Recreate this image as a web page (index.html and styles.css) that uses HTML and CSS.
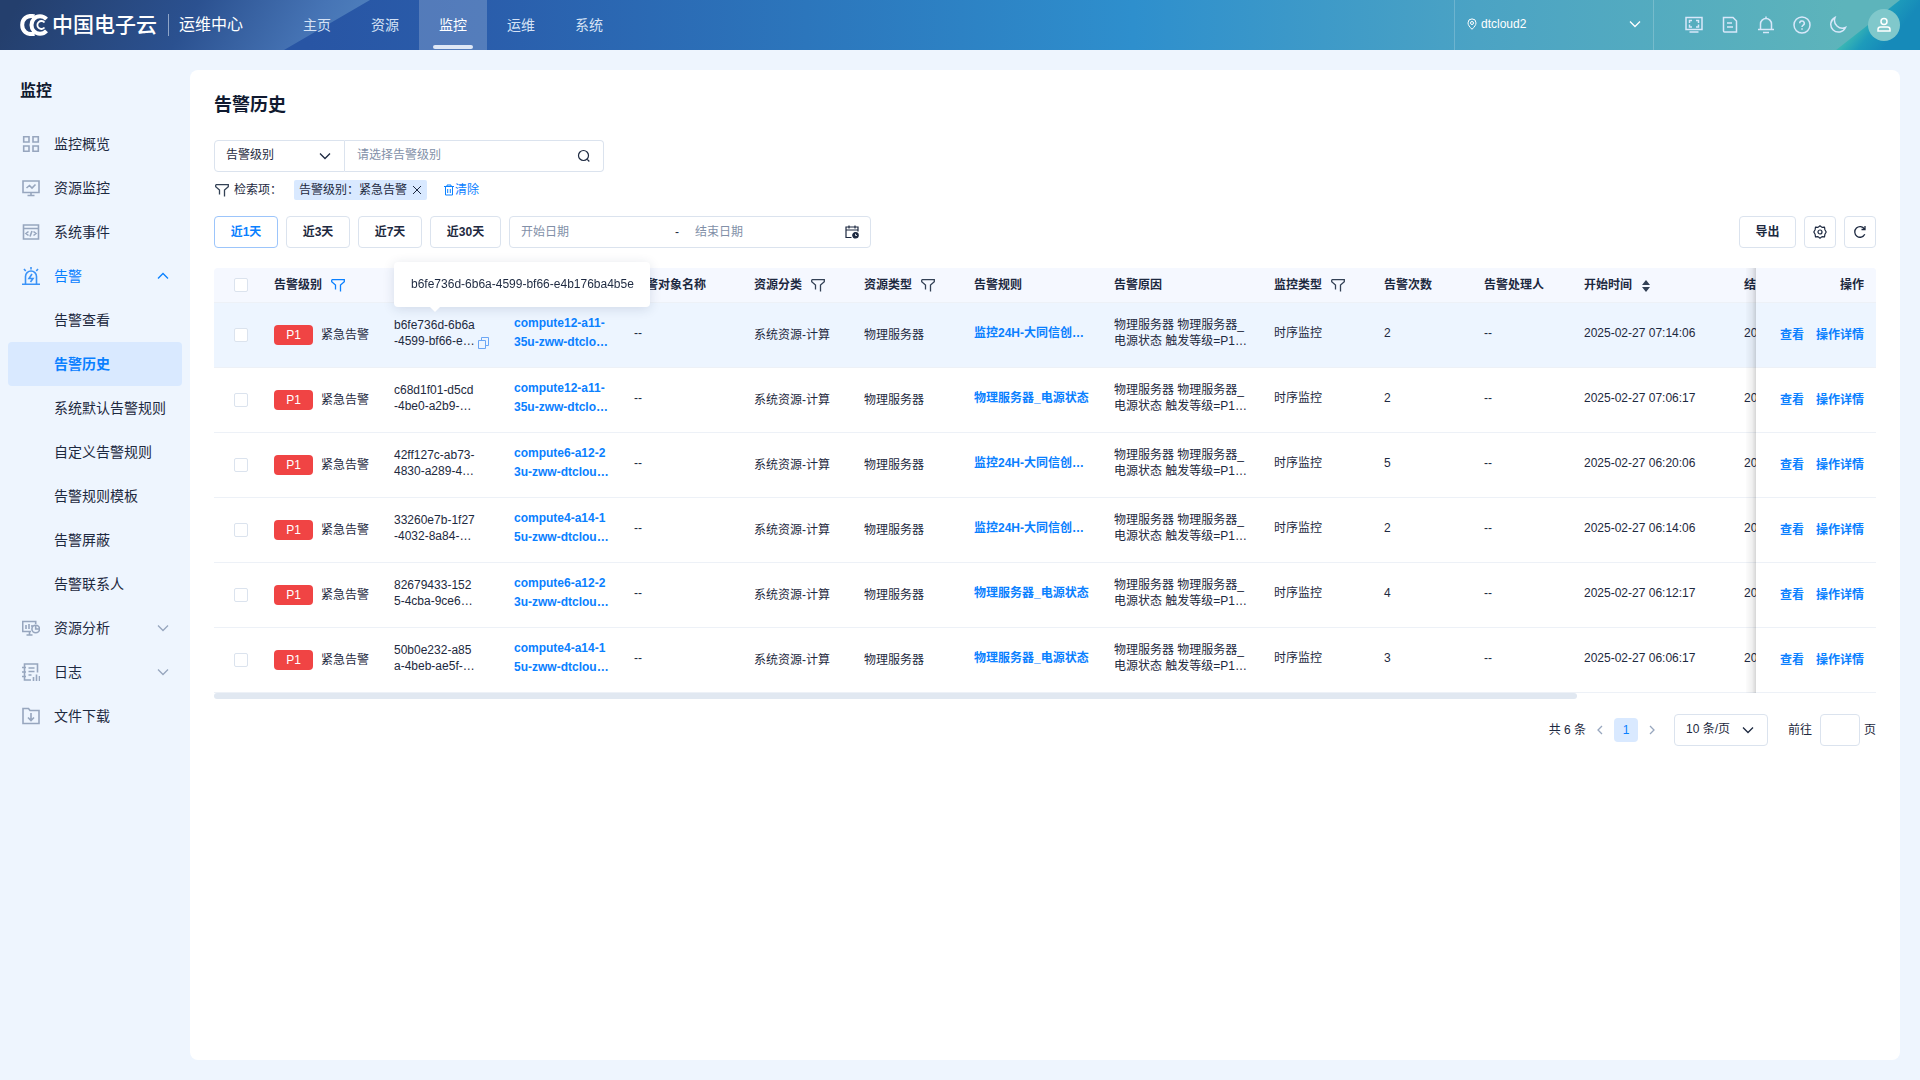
FILE: index.html
```html
<!DOCTYPE html>
<html lang="zh-CN">
<head>
<meta charset="utf-8">
<meta name="viewport" content="width=device-width, initial-scale=1">
<title>告警历史 - 运维中心</title>
<link rel="stylesheet" href="styles.css">
</head>
<body>
<svg class="sprite" aria-hidden="true">
  <symbol id="filter" viewBox="0 0 16 16"><path d="M1.7 2.7h12.6v2L10.500 8v6.500M1.700 2.700v2L5.500 8v4.500" fill="none" stroke="currentColor" stroke-width="1.300"/></symbol>
  <symbol id="down" viewBox="0 0 12 12"><path d="M1 3.500l5 5 5-5" fill="none" stroke="currentColor" stroke-width="1.300"/></symbol>
  <symbol id="up" viewBox="0 0 12 12"><path d="M1 8.500l5-5 5 5" fill="none" stroke="currentColor" stroke-width="1.300"/></symbol>
</svg>

<header class="topbar">
  <a class="brand" href="#">
    <svg class="brand-mark" viewBox="0 0 28 22" fill="none" stroke="#fff"><path d="M14.500 2.300C6.500 .500 2.200 5.500 2.200 11s4.300 10.500 12.300 8.700" stroke-width="4"/><path d="M26.500 5.200C24.500 3 22.500 2.300 20 2.300c-5 0-8.500 3.700-8.500 8.700s3.500 8.700 8.500 8.700c2.500 0 4.500-.7 6.500-2.900" stroke-width="4"/><path d="M24.500 8.500A4 4 0 1 0 24.500 13.500" stroke-width="1.800"/></svg>
    <span class="brand-name">中国电子云</span>
    <span class="brand-product">运维中心</span>
  </a>
  <nav class="topnav">
    <a href="#">主页</a>
    <a href="#">资源</a>
    <a href="#" class="active">监控</a>
    <a href="#">运维</a>
    <a href="#">系统</a>
  </nav>
  <button class="region" type="button">
    <svg width="10" height="12" viewBox="0 0 10 12" fill="none" stroke="currentColor"><path d="M5 11.300C2.500 8.700 1 7 1 4.900a4 4 0 0 1 8 0C9 7 7.500 8.700 5 11.300z"/><circle cx="5" cy="5" r="1.500"/></svg>
    <span>dtcloud2</span>
    <svg class="region-arrow" width="12" height="12"><use href="#down"/></svg>
  </button>
  <div class="tools">
    <button type="button" aria-label="大屏"><svg viewBox="0 0 18 18"><path d="M1 1.500h16v12H1zM4.500 16h9M4.500 7V4.500H7M11 4.500h2.500V7M13.500 8.500V11H11M7 11H4.500V8.500"/></svg></button>
    <button type="button" aria-label="文档"><svg viewBox="0 0 18 18"><path d="M3 1.500h9l3.500 3.500v11H3.500A1 1 0 0 1 2.500 15V1.500zM6 7h5M6 11h6"/></svg></button>
    <button type="button" aria-label="通知"><svg viewBox="0 0 18 18"><path d="M9 .5v2M3.500 13.500V8a5.500 5.500 0 0 1 11 0v5.500M1 13.500h16M6 16.500h6"/></svg></button>
    <button type="button" aria-label="帮助"><svg viewBox="0 0 18 18"><circle cx="9" cy="9" r="8"/><path d="M6.700 7.300a2.300 2.300 0 1 1 3.300 2c-.7.400-1 .8-1 1.700M9 12.300v1.500"/></svg></button>
    <button type="button" aria-label="深色模式"><svg viewBox="0 0 18 18"><path d="M6 1.500a7.700 7.700 0 1 0 10.500 10A7.900 7.900 0 0 1 6 1.500z"/></svg></button>
    <button type="button" class="avatar" aria-label="用户"><svg viewBox="0 0 18 18"><circle cx="9" cy="5.500" r="3"/><path d="M3 15v-1.500c0-1.800 1-2.500 2.500-2.500h7c1.500 0 2.500.7 2.500 2.500V15z"/></svg></button>
  </div>
</header>

<div class="layout">
  <aside class="sidebar">
    <h2>监控</h2>
    <nav class="menu">
      <a href="#"><svg viewBox="0 0 18 18"><path d="M1.700 1.700h5.300v5.300h-5.300zM11 1.700h5.300v5.300h-5.300zM1.700 11h5.300v5.300h-5.300zM11 11h5.300v5.300h-5.300z"/></svg><span>监控概览</span></a>
      <a href="#"><svg viewBox="0 0 18 18"><path d="M1 2h16v11.500H1zM9 13.500v3M5.500 16.500h7M4.500 9l3-2.500 2.500 2.500 3.500-3.500"/></svg><span>资源监控</span></a>
      <a href="#"><svg viewBox="0 0 18 18"><path d="M1.500 2h15v14h-15zM1.500 5.500h15M6.500 8.500l-2.500 2 2.500 2M11.500 8.500l2.500 2-2.500 2M10 8l-2 5.500"/></svg><span>系统事件</span></a>
      <a href="#" class="open"><svg viewBox="0 0 18 18"><path d="M0 17.300h18M3.500 17V9.500a5.500 5.500 0 0 1 11 0V17M9 0v2.500M2 2l1.700 2M16 2l-1.700 2M10 7l-3 4.500h4L8.500 15"/></svg><span>告警</span><svg class="caret"><use href="#up"/></svg></a>
      <a href="#" class="sub">告警查看</a>
      <a href="#" class="sub current">告警历史</a>
      <a href="#" class="sub">系统默认告警规则</a>
      <a href="#" class="sub">自定义告警规则</a>
      <a href="#" class="sub">告警规则模板</a>
      <a href="#" class="sub">告警屏蔽</a>
      <a href="#" class="sub">告警联系人</a>
      <a href="#"><svg viewBox="0 0 18 18"><path d="M9 12.500H.700v-10h13V5M4 6v4M7 5v5M10 6v2M7.500 12.500V16M4.500 16h6"/><circle cx="13.700" cy="10" r="3.800"/><path d="M13.700 6v4h4"/></svg><span>资源分析</span><svg class="caret"><use href="#down"/></svg></a>
      <a href="#"><svg viewBox="0 0 18 18"><path d="M9 17H2.500V1h13v8.500M0 4.500h4M0 9h4M0 13.500h4M6.500 5h6M6.500 8.500h6M6.500 12h3M11.500 18v-4M14.500 18v-6.500M17.500 18v-5"/></svg><span>日志</span><svg class="caret"><use href="#down"/></svg></a>
      <a href="#"><svg viewBox="0 0 18 18"><path d="M1 1.500h5.500l1.500 2h9v13H1zM9 6v7M6 10.500l3 3 3-3"/></svg><span>文件下载</span></a>
    </nav>
  </aside>

  <main class="card">
    <h1>告警历史</h1>

    <form class="search">
      <div class="select-box search-field">
        <select aria-label="检索字段"><option>告警级别</option></select>
        <svg><use href="#down"/></svg>
      </div>
      <div class="search-input">
        <input type="text" aria-label="告警级别" placeholder="请选择告警级别">
        <svg viewBox="0 0 14 14" fill="none" stroke="currentColor" stroke-width="1.200"><circle cx="6.500" cy="6.500" r="5"/><path d="M10.300 10.300l2 2.200"/></svg>
      </div>
    </form>

    <div class="criteria">
      <svg class="icon"><use href="#filter"/></svg>
      <span class="criteria-label">检索项：</span>
      <span class="tag">告警级别：紧急告警<button type="button" aria-label="移除"><svg viewBox="0 0 10 10"><path d="M1 1l8 8M9 1l-8 8" stroke="currentColor"/></svg></button></span>
      <button class="clear" type="button"><svg viewBox="0 0 12 12" fill="none" stroke="currentColor"><path d="M1 2.500h10M4 2.500v-1.500h4v1.500M2.500 3v8h7V3M4.700 5v4M7.300 5v4"/></svg>清除</button>
    </div>

    <div class="toolbar">
      <button class="btn preset selected" type="button">近1天</button>
      <button class="btn preset" type="button">近3天</button>
      <button class="btn preset" type="button">近7天</button>
      <button class="btn preset wide" type="button">近30天</button>
      <div class="date-range">
        <input type="text" aria-label="开始日期" placeholder="开始日期">
        <span>-</span>
        <input type="text" aria-label="结束日期" placeholder="结束日期">
        <svg viewBox="0 0 14 14" fill="none" stroke="currentColor" stroke-width="1.200"><path d="M6.500 12.500H1V2h12v4.500M1 5h12M4 .5v3M10 .5v3"/><circle cx="10.500" cy="10.300" r="2.700" fill="currentColor"/><path d="M10.500 8.800v1.700h1.500" stroke="#fff" stroke-width=".8"/></svg>
      </div>
      <div class="actions">
        <button class="btn export" type="button">导出</button>
        <button class="btn square" type="button" aria-label="设置"><svg viewBox="0 0 14 14" fill="none" stroke="currentColor" stroke-width="1.200"><path d="M7 .8l2 1.600 2.500-.2.400 2.500L13.200 7l-1.300 2.300-.4 2.500-2.500-.2-2 1.600-2-1.600-2.500.2-.4-2.500L.8 7l1.300-2.300.4-2.500 2.500.2z" stroke-linejoin="round"/><circle cx="7" cy="7" r="2"/></svg></button>
        <button class="btn square" type="button" aria-label="刷新"><svg viewBox="0 0 14 14" fill="none" stroke="currentColor" stroke-width="1.300"><path d="M11.800 9.300A5.300 5.300 0 1 1 11.500 4M12 1v3.500H8.500"/></svg></button>
      </div>
    </div>

    <div class="table-wrap">
      <div class="table-scroll">
        <table>
          <colgroup>
            <col class="w48"><col class="w120"><col class="w120"><col class="w120"><col class="w120"><col class="w110"><col class="w110"><col class="w140"><col class="w160"><col class="w110"><col class="w100"><col class="w100"><col class="w160"><col class="w160"><col class="w232"><col class="w120">
          </colgroup>
          <thead>
            <tr>
              <th class="check"><input type="checkbox" aria-label="全选"></th>
              <th>告警级别<svg class="icon on"><use href="#filter"/></svg></th>
              <th aria-label="告警ID"></th>
              <th aria-label="告警对象"></th>
              <th>告警对象名称</th>
              <th>资源分类<svg class="icon"><use href="#filter"/></svg></th>
              <th>资源类型<svg class="icon"><use href="#filter"/></svg></th>
              <th>告警规则</th>
              <th>告警原因</th>
              <th>监控类型<svg class="icon"><use href="#filter"/></svg></th>
              <th>告警次数</th>
              <th>告警处理人</th>
              <th>开始时间<svg class="sort" viewBox="0 0 8 12"><path d="M4 0l4 5H0zM4 12l4-5H0z"/></svg></th>
              <th>结束时间</th>
              <th></th>
              <th class="ops">操作</th>
            </tr>
          </thead>
          <tbody>
            <tr class="hover">
              <td class="check"><input type="checkbox" aria-label="选择"></td>
              <td><span class="level">P1</span>紧急告警</td>
              <td class="raised"><div class="id-box"><span>b6fe736d-6b6a<br>-4599-bf66-e…</span><button class="copy" type="button" aria-label="复制"><svg viewBox="0 0 12 12" fill="none" stroke="currentColor"><path d="M.5 3.500h7v8h-7zM3.500 3.500v-3h7v8h-3"/></svg></button></div></td>
              <td class="object raised"><a href="#">compute12-a11-<br>35u-zww-dtclo…</a></td>
              <td class="raised">--</td><td>系统资源-计算</td><td>物理服务器</td>
              <td class="raised"><a href="#">监控24H-大同信创…</a></td>
              <td class="raised">物理服务器 物理服务器_<br>电源状态 触发等级=P1…</td>
              <td class="raised">时序监控</td><td class="raised">2</td><td class="raised">--</td><td class="raised">2025-02-27 07:14:06</td><td class="raised">2025</td><td></td>
              <td class="ops"><a href="#">查看</a><a href="#">操作详情</a></td>
            </tr>
            <tr>
              <td class="check"><input type="checkbox" aria-label="选择"></td>
              <td><span class="level">P1</span>紧急告警</td>
              <td class="raised">c68d1f01-d5cd<br>-4be0-a2b9-…</td>
              <td class="object raised"><a href="#">compute12-a11-<br>35u-zww-dtclo…</a></td>
              <td class="raised">--</td><td>系统资源-计算</td><td>物理服务器</td>
              <td class="raised"><a href="#">物理服务器_电源状态</a></td>
              <td class="raised">物理服务器 物理服务器_<br>电源状态 触发等级=P1…</td>
              <td class="raised">时序监控</td><td class="raised">2</td><td class="raised">--</td><td class="raised">2025-02-27 07:06:17</td><td class="raised">2025</td><td></td>
              <td class="ops"><a href="#">查看</a><a href="#">操作详情</a></td>
            </tr>
            <tr>
              <td class="check"><input type="checkbox" aria-label="选择"></td>
              <td><span class="level">P1</span>紧急告警</td>
              <td class="raised">42ff127c-ab73-<br>4830-a289-4…</td>
              <td class="object raised"><a href="#">compute6-a12-2<br>3u-zww-dtclou…</a></td>
              <td class="raised">--</td><td>系统资源-计算</td><td>物理服务器</td>
              <td class="raised"><a href="#">监控24H-大同信创…</a></td>
              <td class="raised">物理服务器 物理服务器_<br>电源状态 触发等级=P1…</td>
              <td class="raised">时序监控</td><td class="raised">5</td><td class="raised">--</td><td class="raised">2025-02-27 06:20:06</td><td class="raised">2025</td><td></td>
              <td class="ops"><a href="#">查看</a><a href="#">操作详情</a></td>
            </tr>
            <tr>
              <td class="check"><input type="checkbox" aria-label="选择"></td>
              <td><span class="level">P1</span>紧急告警</td>
              <td class="raised">33260e7b-1f27<br>-4032-8a84-…</td>
              <td class="object raised"><a href="#">compute4-a14-1<br>5u-zww-dtclou…</a></td>
              <td class="raised">--</td><td>系统资源-计算</td><td>物理服务器</td>
              <td class="raised"><a href="#">监控24H-大同信创…</a></td>
              <td class="raised">物理服务器 物理服务器_<br>电源状态 触发等级=P1…</td>
              <td class="raised">时序监控</td><td class="raised">2</td><td class="raised">--</td><td class="raised">2025-02-27 06:14:06</td><td class="raised">2025</td><td></td>
              <td class="ops"><a href="#">查看</a><a href="#">操作详情</a></td>
            </tr>
            <tr>
              <td class="check"><input type="checkbox" aria-label="选择"></td>
              <td><span class="level">P1</span>紧急告警</td>
              <td class="raised">82679433-152<br>5-4cba-9ce6…</td>
              <td class="object raised"><a href="#">compute6-a12-2<br>3u-zww-dtclou…</a></td>
              <td class="raised">--</td><td>系统资源-计算</td><td>物理服务器</td>
              <td class="raised"><a href="#">物理服务器_电源状态</a></td>
              <td class="raised">物理服务器 物理服务器_<br>电源状态 触发等级=P1…</td>
              <td class="raised">时序监控</td><td class="raised">4</td><td class="raised">--</td><td class="raised">2025-02-27 06:12:17</td><td class="raised">2025</td><td></td>
              <td class="ops"><a href="#">查看</a><a href="#">操作详情</a></td>
            </tr>
            <tr>
              <td class="check"><input type="checkbox" aria-label="选择"></td>
              <td><span class="level">P1</span>紧急告警</td>
              <td class="raised">50b0e232-a85<br>a-4beb-ae5f-…</td>
              <td class="object raised"><a href="#">compute4-a14-1<br>5u-zww-dtclou…</a></td>
              <td class="raised">--</td><td>系统资源-计算</td><td>物理服务器</td>
              <td class="raised"><a href="#">物理服务器_电源状态</a></td>
              <td class="raised">物理服务器 物理服务器_<br>电源状态 触发等级=P1…</td>
              <td class="raised">时序监控</td><td class="raised">3</td><td class="raised">--</td><td class="raised">2025-02-27 06:06:17</td><td class="raised">2025</td><td></td>
              <td class="ops"><a href="#">查看</a><a href="#">操作详情</a></td>
            </tr>
          </tbody>
        </table>
      </div>
      <div class="scroll-thumb"></div>
      <div class="tooltip" role="tooltip">b6fe736d-6b6a-4599-bf66-e4b176ba4b5e</div>
    </div>

    <div class="pagination">
      <span>共 6 条</span>
      <button class="page-arrow" type="button" aria-label="上一页"><svg viewBox="0 0 8 12"><path d="M6 2L2 6l4 4"/></svg></button>
      <button class="page-current" type="button">1</button>
      <button class="page-arrow" type="button" aria-label="下一页"><svg viewBox="0 0 8 12"><path d="M2 2l4 4-4 4"/></svg></button>
      <div class="select-box page-size">
        <select aria-label="每页条数"><option>10 条/页</option></select>
        <svg><use href="#down"/></svg>
      </div>
      <label class="jump">前往<input type="text">页</label>
    </div>
  </main>
</div>
</body>
</html>
```
FILE: styles.css
```css
* { box-sizing: border-box; }

body {
  margin: 0;
  min-height: 100vh;
  display: flex;
  flex-direction: column;
  background: #eef5fe;
  color: #1d2940;
  font: 12px/16px "Liberation Sans", "Noto Sans CJK SC", sans-serif;
}

a { color: inherit; text-decoration: none; }
button, input, select { font: inherit; color: inherit; }
button { padding: 0; border: 0; background: none; cursor: pointer; }
input::placeholder { color: #8290a8; opacity: 1; }
svg { flex: none; }
.sprite { position: absolute; width: 0; height: 0; }
.icon { width: 16px; height: 16px; color: #334155; }

/* Top bar */
.topbar {
  position: relative;
  isolation: isolate;
  display: flex;
  align-items: center;
  height: 50px;
  overflow: hidden;
  color: #fff;
  background: linear-gradient(90deg, #2855a4 16%, #2a5dab 25%, #2e8fcd 59%, #4ba3c4 77%, #5db4bb 96%);
}
.topbar::before, .topbar::after {
  content: "";
  position: absolute;
  z-index: -1;
  top: 0;
  bottom: 0;
}
.topbar::before {
  left: 0;
  width: 370px;
  background: linear-gradient(120deg, #243f6d 5%, #2b5190 50%, #4674b5 82%, #4f80bd 96%);
  clip-path: polygon(0 0, 100% 0, 284px 100%, 0 100%);
}
.topbar::after {
  right: 0;
  width: 84px;
  background: linear-gradient(130deg, #3fbbb3 32%, #1d9bbb 50%, #168ab9 70%);
  clip-path: polygon(64px 0, 100% 0, 100% 100%, 0 100%);
}
.brand { display: flex; align-items: center; padding-left: 20px; width: 283px; }
.brand-mark { width: 28px; height: 22px; margin-right: 4px; }
.brand-name { font-size: 21px; line-height: 24px; font-weight: 500; }
.brand-product {
  margin-left: 11px;
  padding-left: 10px;
  border-left: 1px solid #8fa5c8;
  font-size: 16px;
  line-height: 22px;
}
.topnav { display: flex; align-self: stretch; }
.topnav a {
  display: flex;
  align-items: center;
  padding: 0 20px;
  font-size: 14px;
  color: #d5e2f5;
}
.topnav .active {
  position: relative;
  color: #fff;
  background: rgba(255, 255, 255, .2);
}
.topnav .active::after {
  content: "";
  position: absolute;
  left: 14px;
  right: 14px;
  bottom: 1px;
  height: 4px;
  border-radius: 2px;
  background: #dfe8f6;
}
.region {
  display: flex;
  align-items: center;
  gap: 4px;
  align-self: stretch;
  width: 200px;
  margin-left: auto;
  padding: 0 12px 2px;
  border: solid rgba(255, 255, 255, .2);
  border-width: 0 1px;
}
.region-arrow { margin-left: auto; }
.tools { display: flex; align-items: center; gap: 18px; padding: 0 20px 0 31px; color: #d8e8fa; }
.tools button { width: 18px; height: 18px; }
.tools svg { display: block; width: 18px; height: 18px; fill: none; stroke: currentColor; stroke-width: 1.5; }
.tools .avatar {
  display: grid;
  place-items: center;
  width: 32px;
  height: 32px;
  margin-left: 3px;
  border-radius: 50%;
  background: #80c8cb;
  color: #fff;
}

/* Side menu */
.layout { flex: 1; display: flex; align-items: stretch; }
.sidebar { flex: none; width: 190px; padding: 29px 8px 20px; }
.sidebar h2 { margin: 0 12px 19px; font-size: 16px; line-height: 24px; color: #101a30; }
.menu a {
  display: flex;
  align-items: center;
  gap: 14px;
  height: 44px;
  padding: 0 13px 0 14px;
  border-radius: 4px;
  font-size: 14px;
}
.menu svg { width: 18px; height: 18px; fill: none; stroke: #97a6be; stroke-width: 1.6; }
.menu .caret { width: 12px; height: 12px; margin-left: auto; color: #97a6be; stroke: none; }
.menu .sub { padding-left: 46px; }
.menu .open, .menu .open .caret { color: #0a80ff; }
.menu .open svg { stroke: #3b93f7; }
.menu .open .caret { stroke: none; }
.menu .current { background: #d9e9ff; color: #0a80ff; font-weight: 700; }

/* Content card */
.card {
  flex: 1;
  min-width: 0;
  margin: 20px 20px 20px 0;
  padding: 23px 24px 24px;
  border-radius: 8px;
  background: #fff;
}
.card h1 { margin: 0 0 23px; font-size: 18px; line-height: 24px; color: #101a30; }

.select-box { position: relative; height: 32px; }
.select-box select {
  width: 100%;
  height: 100%;
  padding: 0 11px 2px;
  border: 1px solid #dbe3ee;
  border-radius: 4px;
  appearance: none;
  background: #fff;
}
.select-box svg { position: absolute; right: 14px; top: 10px; width: 12px; height: 12px; pointer-events: none; }
.search { display: flex; }
.search-field { width: 131px; }
.search-field select { border-radius: 4px 0 0 4px; }
.search-input {
  display: flex;
  align-items: center;
  width: 259px;
  height: 32px;
  padding: 0 12px;
  border: 1px solid #dbe3ee;
  border-left: 0;
  border-radius: 0 4px 4px 0;
}
.search-input input { flex: 1; min-width: 0; border: 0; padding: 0 0 2px; outline: 0; background: none; }
.search-input svg { width: 14px; height: 14px; }

.criteria { display: flex; align-items: center; height: 20px; margin: 8px 0 16px; }
.criteria-label { width: 60px; margin-right: 4px; padding-left: 4px; }
.tag {
  display: flex;
  align-items: center;
  gap: 5px;
  height: 20px;
  margin-right: 16px;
  padding: 0 5px;
  border-radius: 2px;
  background: #d9e9ff;
}
.tag svg { display: block; width: 10px; height: 10px; }
.clear { display: flex; align-items: center; color: #0a80ff; }
.clear svg { width: 12px; height: 12px; }

.toolbar { display: flex; gap: 8px; margin-bottom: 20px; }
.btn {
  height: 32px;
  border: 1px solid #dbe3ee;
  border-radius: 4px;
  background: #fff;
  font-weight: 700;
}
.btn.preset { width: 64px; }
.btn.wide { width: 71px; }
.btn.selected { border-color: #9cc5fb; color: #0a80ff; }
.date-range {
  display: flex;
  align-items: center;
  width: 362px;
  height: 32px;
  padding: 0 10px 0 11px;
  border: 1px solid #dbe3ee;
  border-radius: 4px;
}
.date-range input { width: 154px; padding: 0; border: 0; outline: 0; background: none; }
.date-range span { width: 20px; }
.date-range svg { width: 14px; height: 14px; margin-left: -4px; }
.actions { display: flex; gap: 8px; margin-left: auto; }
.btn.export { width: 57px; }
.btn.square { display: grid; place-items: center; width: 32px; }
.btn.square svg { width: 14px; height: 14px; }

/* Alarm table */
.table-wrap { position: relative; }
.table-scroll { overflow-x: auto; scrollbar-width: none; border-radius: 4px 4px 0 0; }
table { width: 2030px; table-layout: fixed; border-collapse: separate; border-spacing: 0; }
.w48 { width: 48px; }
.w100 { width: 100px; }
.w110 { width: 110px; }
.w120 { width: 120px; }
.w140 { width: 140px; }
.w160 { width: 160px; }
.w232 { width: 232px; }
th, td {
  padding: 0 0 0 12px;
  border-bottom: 1px solid #edf1f7;
  background: #fff;
  text-align: left;
  white-space: nowrap;
}
th { height: 35px; background: #f5f8ff; }
td { height: 65px; }
th .icon, .sort { margin-left: 8px; vertical-align: middle; }
th .on { color: #0a80ff; }
.sort { width: 8px; height: 12px; margin-left: 10px; fill: #334155; }
.hover td { background: #edf5ff; }
.raised { padding-bottom: 4px; }
.check { padding-left: 20px; }
.check input {
  display: block;
  width: 14px;
  height: 14px;
  margin: 0;
  border: 1px solid #dbe3ee;
  border-radius: 2px;
  appearance: none;
  background: #fff;
}
.level {
  display: inline-block;
  width: 39px;
  margin-right: 8px;
  border-radius: 4px;
  background: #f04444;
  color: #fff;
  line-height: 20px;
  text-align: center;
}
td a { color: #0a80ff; font-weight: 700; }
.object { line-height: 19px; }
.id-box { display: flex; align-items: flex-end; gap: 3px; }
.copy { color: #6ba6f5; }
.copy svg { display: block; width: 12px; height: 12px; }
.ops {
  position: sticky;
  right: 0;
  padding: 0 12px 0 0;
  text-align: right;
}
.ops::before {
  content: "";
  position: absolute;
  top: 0;
  bottom: -1px;
  right: 100%;
  width: 10px;
  background: linear-gradient(90deg, rgba(0, 0, 0, .01), rgba(0, 0, 0, .06) 60%, rgba(0, 0, 0, .16));
}
.ops a + a { margin-left: 12px; }
.scroll-thumb { width: 82%; height: 6px; border-radius: 3px; background: #e1e8f1; }
.tooltip {
  position: absolute;
  left: 180px;
  top: -6px;
  padding: 14px 16px 15px 17px;
  border-radius: 4px;
  background: #fff;
  box-shadow: 0 2px 12px rgba(30, 50, 90, .14);
}
.tooltip::after {
  content: "";
  position: absolute;
  left: 36px;
  top: 100%;
  border: 5px solid transparent;
  border-top-color: #fff;
  border-bottom: 0;
}

/* Pagination */
.pagination { display: flex; align-items: center; justify-content: flex-end; margin-top: 15px; }
.page-arrow { width: 28px; height: 24px; }
.page-arrow svg { display: block; width: 8px; height: 12px; margin: 0 auto; fill: none; stroke: #97a6be; stroke-width: 1.3; }
.page-current { width: 24px; height: 24px; border-radius: 4px; background: #d9e9ff; color: #0a80ff; }
.page-size { width: 94px; margin: 0 20px 0 8px; }
.jump { display: flex; align-items: center; }
.jump input { width: 40px; height: 32px; margin: 0 4px 0 8px; border: 1px solid #dbe3ee; border-radius: 4px; }
```
